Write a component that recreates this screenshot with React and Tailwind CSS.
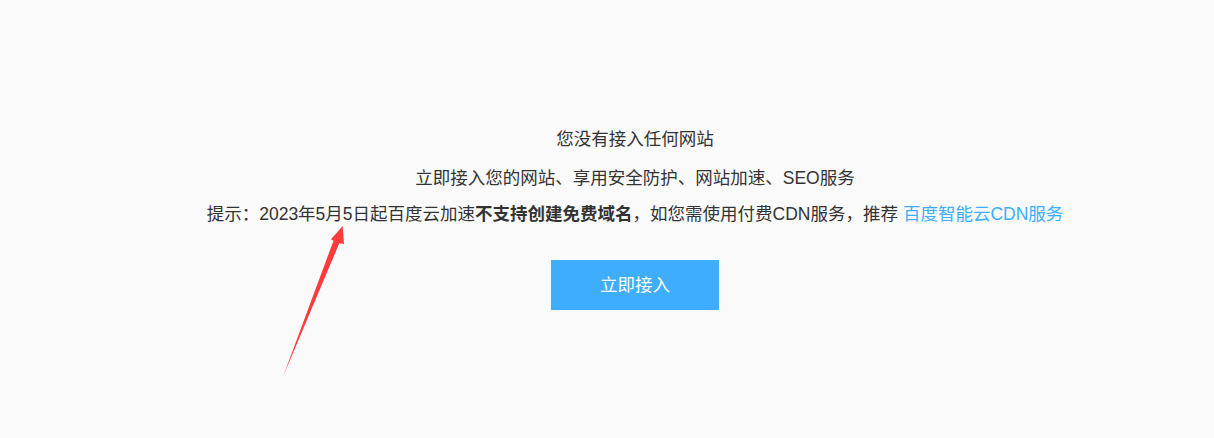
export default function App() {
  return (
    <div
      className="relative min-h-[438px] w-full bg-[#fafafa] pl-[56px] text-[#333333]"
      style={{ fontFamily: '"Liberation Sans", Arial, "Noto Sans CJK SC", sans-serif' }}
    >
      <div className="flex flex-col items-center text-[17.5px] leading-6">
        <p className="mt-[127px]">您没有接入任何网站</p>
        <p className="mt-[15px]">立即接入您的网站、享用安全防护、网站加速、SEO服务</p>
        <p className="mt-[12px]">
          提示：2023年5月5日起百度云加速<span className="font-bold">不支持创建免费域名</span>
          ，如您需使用付费CDN服务，推荐{" "}
          <a href="#" className="text-[#3eaefc]">
            百度智能云CDN服务
          </a>
        </p>
        <button className="mt-[34px] h-[50px] w-[168px] bg-[#3eaefc] text-[17.5px] text-white">
          立即接入
        </button>
      </div>

      {/* red annotation arrow */}
      <svg
        className="absolute left-[280px] top-[220px]"
        width="70"
        height="160"
        viewBox="0 0 70 160"
      >
        <polygon
          points="62.7,6 51,19.3 53.5,20.7 3.3,156 59.3,23.3 64,24"
          fill="#ff3b3b"
        />
      </svg>
    </div>
  );
}
